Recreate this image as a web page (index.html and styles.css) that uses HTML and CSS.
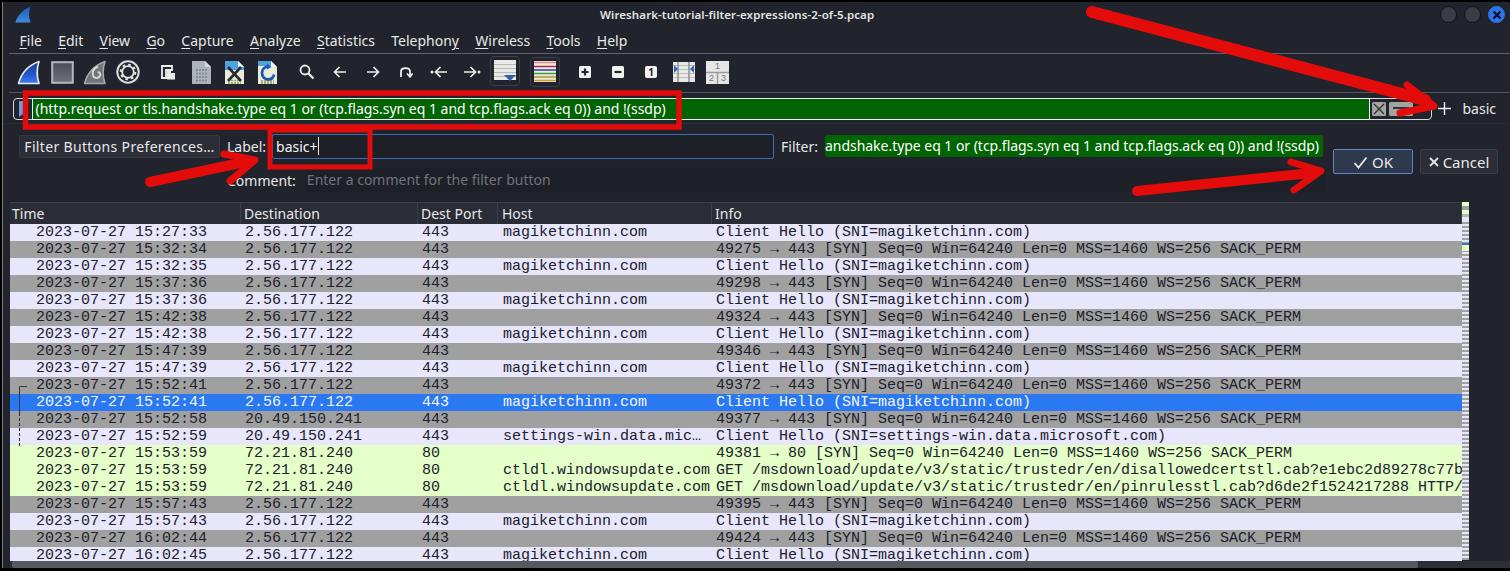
FILE: index.html
```html
<!DOCTYPE html>
<html lang="en">
<head>
<meta charset="utf-8">
<title>Wireshark</title>
<link rel="stylesheet" href="styles.css">
</head>
<body>
<div class="window">
  <header class="titlebar">
    <svg class="logo" width="17" height="17" viewBox="0 0 17 17"><defs><linearGradient id="lg" x1="0" y1="0" x2="0" y2="1"><stop offset="0" stop-color="#1f55b4"/><stop offset="1" stop-color="#3f8ae0"/></linearGradient></defs><path d="M0.5 16.5C2 10 7 4 15.5 0.5C13.5 6 13.5 11 15.5 16.5Z" fill="url(#lg)"/></svg>
    <div class="title">Wireshark-tutorial-filter-expressions-2-of-5.pcap</div>
    <div class="winbtns">
      <span class="winbtn"></span>
      <span class="winbtn"></span>
      <span class="winbtn close"><svg width="10" height="10" viewBox="0 0 10 10"><path d="M1.5 1.5L8.5 8.5M8.5 1.5L1.5 8.5" stroke="#0c1020" stroke-width="2.2"/></svg></span>
    </div>
  </header>
  <nav class="menu">
    <span><u>F</u>ile</span><span><u>E</u>dit</span><span><u>V</u>iew</span><span><u>G</u>o</span><span><u>C</u>apture</span><span><u>A</u>nalyze</span><span><u>S</u>tatistics</span><span>Telephon<u>y</u></span><span><u>W</u>ireless</span><span><u>T</u>ools</span><span><u>H</u>elp</span>
  </nav>
  <div class="toolbar">
    <div class="tgroup">
      <div class="tool"><svg width="24" height="25" viewBox="0 0 24 25"><defs><linearGradient id="fin" x1="0" y1="0" x2="0" y2="1"><stop offset="0" stop-color="#1b3f96"/><stop offset="0.6" stop-color="#2358cf"/><stop offset="1" stop-color="#3f7fe8"/></linearGradient></defs><path d="M1.5 23.5C4 14 11 5.500 22 1.500C19.500 9 19.500 16 22 23.500Z" fill="url(#fin)" stroke="#e8ecf4" stroke-width="1.600" stroke-linejoin="round"/></svg></div>
      <div class="tool"><svg width="23" height="23" viewBox="0 0 23 23"><defs><linearGradient id="stp" x1="0" y1="0" x2="0" y2="1"><stop offset="0" stop-color="#4a4e58"/><stop offset="1" stop-color="#6e727b"/></linearGradient></defs><rect x="1.200" y="1.200" width="20.600" height="20.600" fill="url(#stp)" stroke="#b4b7bd" stroke-width="2"/></svg></div>
      <div class="tool"><svg width="24" height="25" viewBox="0 0 24 25"><path d="M1.500 23.500C4 14 11 5.500 22 1.500C19.500 9 19.500 16 22 23.500Z" fill="#71747b" stroke="#a6a9ae" stroke-width="1.500" stroke-linejoin="round"/><path d="M15 6.500C10.500 8.500 9 12 10 15.500C11 18.500 15.500 18.800 17 16C18 14 16.500 11.800 14.600 12.500" fill="none" stroke="#d5d7da" stroke-width="2"/></svg></div>
      <div class="tool"><svg width="24" height="24" viewBox="0 0 24 24"><circle cx="12" cy="12" r="10.700" fill="#23262e" stroke="#dcdcdc" stroke-width="2"/><circle cx="12" cy="12" r="5.800" fill="none" stroke="#e4e4e4" stroke-width="1.800"/><circle cx="12" cy="12" r="7.300" fill="none" stroke="#e4e4e4" stroke-width="2" stroke-dasharray="2.600 3.130"/></svg></div>
    </div>
    <div class="tgroup">
      <div class="tool"><svg width="15" height="15" viewBox="0 0 15 15"><path d="M1 1H11V5H5V13H1Z" fill="#23262e" stroke="#f0f0f0" stroke-width="1.800"/><path d="M6 6H10V8H14V14.500H6Z" fill="#e8e8e8"/></svg></div>
      <div class="tool"><svg width="21" height="25" viewBox="0 0 21 25"><path d="M1 1H14L20 7V24H1Z" fill="#aeb3bb"/><path d="M14 1V7H20Z" fill="#d5d8dc"/><path d="M5 10H16M5 13.500H16M5 17H16M5 20.500H16" stroke="#858a94" stroke-width="1.800" stroke-dasharray="2 1"/></svg></div>
      <div class="tool"><svg width="21" height="25" viewBox="0 0 21 25"><path d="M1 1H14L20 7V24H1Z" fill="#e8ecd8"/><path d="M1 1H14L20 7V10H1Z" fill="#4fa3e0"/><path d="M14 1V7H20Z" fill="#eef2f6"/><path d="M4 20.500H17M4 23H17" stroke="#8d9a60" stroke-width="1.500" stroke-dasharray="2 1"/><path d="M4 7L17 21M17 7L4 21" stroke="#2a2c30" stroke-width="2.600"/></svg></div>
      <div class="tool"><svg width="21" height="25" viewBox="0 0 21 25"><path d="M1 1H14L20 7V24H1Z" fill="#e8ecd8"/><path d="M1 1H14L20 7V6H1Z" fill="#4fa3e0"/><path d="M14 1V7H20Z" fill="#eef2f6"/><path d="M4 21H17M4 23H17" stroke="#8d9a60" stroke-width="1.500" stroke-dasharray="2 1"/><path d="M12 6.500C7.500 6.500 5 9.500 5 13C5 17 8 19.500 11 19.500C14 19.500 16.500 17.500 17 14.500" fill="none" stroke="#1f57b8" stroke-width="2.800"/><path d="M10 3.500L14.500 7L10 9.500Z" fill="#1f57b8"/></svg></div>
    </div>
    <div class="tgroup">
      <div class="tool"><svg width="16" height="16" viewBox="0 0 16 16"><circle cx="6" cy="6" r="4.500" fill="none" stroke="#eee" stroke-width="1.800"/><path d="M9.500 9.500L14.500 14.500" stroke="#eee" stroke-width="2.200"/></svg></div>
      <div class="tool"><svg width="14" height="14" viewBox="0 0 14 14"><path d="M13 7H2M6.500 2L1.500 7L6.500 12" fill="none" stroke="#eee" stroke-width="1.700"/></svg></div>
      <div class="tool"><svg width="14" height="14" viewBox="0 0 14 14"><path d="M1 7H12M7.500 2L12.500 7L7.500 12" fill="none" stroke="#eee" stroke-width="1.700"/></svg></div>
      <div class="tool"><svg width="14" height="14" viewBox="0 0 14 14"><path d="M2 12V6.500C2 2 11 2 11 6.500V11" fill="none" stroke="#eee" stroke-width="1.800"/><path d="M8 8.500L11 12L13.500 8.500" fill="none" stroke="#eee" stroke-width="1.600"/></svg></div>
      <div class="tool"><svg width="18" height="14" viewBox="0 0 18 14"><circle cx="2" cy="7" r="1.500" fill="#eee"/><path d="M17 7H6M10.500 2L5.500 7L10.500 12" fill="none" stroke="#eee" stroke-width="1.700"/></svg></div>
      <div class="tool"><svg width="18" height="14" viewBox="0 0 18 14"><circle cx="16" cy="7" r="1.500" fill="#eee"/><path d="M1 7H12M7.500 2L12.500 7L7.500 12" fill="none" stroke="#eee" stroke-width="1.700"/></svg></div>
      <div class="tool boxed"><svg width="22" height="22" viewBox="0 0 22 22"><rect width="22" height="20" fill="#e9e9e6"/><path d="M0 4.500H22M0 8.500H22M0 12.500H22M0 16.500H22" stroke="#b9b9b5"/><path d="M10 15H22L16 21Z" fill="#2f5fa8"/></svg></div>
    </div>
    <div class="tgroup">
      <div class="tool boxed"><svg width="22" height="22" viewBox="0 0 22 22"><rect width="22" height="21" fill="#ecebe6"/><path d="M0 1.500H22" stroke="#e08a8a" stroke-width="1.500"/><path d="M0 5.500H22" stroke="#b8263a" stroke-width="1.500"/><path d="M0 9H22" stroke="#2c3fae" stroke-width="1.500"/><path d="M0 12.500H22" stroke="#3f9a3a" stroke-width="1.500"/><path d="M0 16H22" stroke="#a39a2a" stroke-width="1.500"/><path d="M0 19.500H22" stroke="#cf9a2c" stroke-width="1.500"/></svg></div>
    </div>
    <div class="tgroup">
      <div class="tool"><svg width="12" height="12" viewBox="0 0 12 12"><rect width="12" height="12" rx="1.500" fill="#f2f2f2"/><path d="M2.500 6H9.500M6 2.500V9.500" stroke="#22252e" stroke-width="2.200"/></svg></div>
      <div class="tool"><svg width="12" height="12" viewBox="0 0 12 12"><rect width="12" height="12" rx="1.500" fill="#f2f2f2"/><path d="M2.500 6H9.500" stroke="#22252e" stroke-width="2.200"/></svg></div>
      <div class="tool"><span class="onebox">1</span></div>
      <div class="tool"><svg width="22" height="20" viewBox="0 0 22 20"><rect width="22" height="20" fill="#e9e9e6"/><path d="M0 3.500H22M0 7.500H22M0 11.500H22M0 15.500H22" stroke="#bdbdb9"/><path d="M5 0V20M16 0V20" stroke="#8a8d92" stroke-width="1.500"/><path d="M1 3V11L5 7ZM21 3V11L17 7Z" fill="#2a6bb0"/></svg></div>
      <div class="tool"><svg width="23" height="23" viewBox="0 0 23 23"><rect width="23" height="23" fill="#e6e6e6"/><path d="M0 11.500H23M11.500 11.500V23" stroke="#9a9a9a" stroke-width="1.400"/><text x="11.500" y="8" class="gridnum">1</text><text x="5.500" y="20" class="gridnum">2</text><text x="17.500" y="20" class="gridnum">3</text></svg></div>
    </div>
  </div>
  <div class="filterrow">
    <div class="filterbar">
      <svg class="bookmark" width="8" height="16" viewBox="0 0 8 16"><path d="M0 0H8V16L4 13L0 16Z" fill="#6f9bd8"/></svg>
      <div class="filterinput">(http.request or tls.handshake.type eq 1 or (tcp.flags.syn eq 1 and tcp.flags.ack eq 0)) and !(ssdp)</div>
      <svg class="clear" width="14" height="14" viewBox="0 0 14 14"><rect width="14" height="14" rx="1.500" fill="#a3a3a0"/><path d="M2 2L12 12M12 2L2 12" stroke="#2c2e33" stroke-width="1.200"/></svg>
      <svg class="drop" width="24" height="14" viewBox="0 0 24 14"><rect width="24" height="14" rx="1.500" fill="#a3a3a0"/><path d="M4 6H20" stroke="#33353b" stroke-width="2"/></svg>
    </div>
    <span class="plus"><svg width="13" height="13" viewBox="0 0 13 13"><path d="M0 6.500H13M6.500 0V13" stroke="#f0f0f0" stroke-width="1.400"/></svg></span>
    <span class="basic">basic</span>
  </div>
  <section class="editor">
    <div class="editorform">
      <div class="editrow">
        <button class="prefs">Filter Buttons Preferences…</button>
        <label class="flabel">Label:</label>
        <div class="labelinput">basic+<span class="caret"></span></div>
        <label class="flabel filterlabel">Filter:</label>
        <div class="filtervalue"><span>handshake.type eq 1 or (tcp.flags.syn eq 1 and tcp.flags.ack eq 0)) and !(ssdp)</span></div>
      </div>
      <div class="commentrow">
        <label class="flabel">Comment:</label>
        <div class="commentinput">Enter a comment for the filter button</div>
      </div>
    </div>
    <div class="actions">
      <button class="act ok"><svg width="15" height="13" viewBox="0 0 15 13"><path d="M1.500 7L5.500 11.500L13.500 1.500" fill="none" stroke="#e8e8e8" stroke-width="1.800"/></svg>OK</button>
      <button class="act"><svg width="10" height="10" viewBox="0 0 10 10"><path d="M1 1L9 9M9 1L1 9" stroke="#e8e8e8" stroke-width="1.800"/></svg>Cancel</button>
    </div>
  </section>
  <main class="packets">
    <div class="tablewrap">
      <div class="thead"><span>Time</span><span>Destination</span><span>Dest Port</span><span>Host</span><span>Info</span></div>
      <div class="rows">
        <div class="row l"><span>2023-07-27 15:27:33</span><span>2.56.177.122</span><span>443</span><span>magiketchinn.com</span><span>Client Hello (SNI=magiketchinn.com)</span></div>
        <div class="row g"><span>2023-07-27 15:32:34</span><span>2.56.177.122</span><span>443</span><span></span><span>49275 → 443 [SYN] Seq=0 Win=64240 Len=0 MSS=1460 WS=256 SACK_PERM</span></div>
        <div class="row l"><span>2023-07-27 15:32:35</span><span>2.56.177.122</span><span>443</span><span>magiketchinn.com</span><span>Client Hello (SNI=magiketchinn.com)</span></div>
        <div class="row g"><span>2023-07-27 15:37:36</span><span>2.56.177.122</span><span>443</span><span></span><span>49298 → 443 [SYN] Seq=0 Win=64240 Len=0 MSS=1460 WS=256 SACK_PERM</span></div>
        <div class="row l"><span>2023-07-27 15:37:36</span><span>2.56.177.122</span><span>443</span><span>magiketchinn.com</span><span>Client Hello (SNI=magiketchinn.com)</span></div>
        <div class="row g"><span>2023-07-27 15:42:38</span><span>2.56.177.122</span><span>443</span><span></span><span>49324 → 443 [SYN] Seq=0 Win=64240 Len=0 MSS=1460 WS=256 SACK_PERM</span></div>
        <div class="row l"><span>2023-07-27 15:42:38</span><span>2.56.177.122</span><span>443</span><span>magiketchinn.com</span><span>Client Hello (SNI=magiketchinn.com)</span></div>
        <div class="row g"><span>2023-07-27 15:47:39</span><span>2.56.177.122</span><span>443</span><span></span><span>49346 → 443 [SYN] Seq=0 Win=64240 Len=0 MSS=1460 WS=256 SACK_PERM</span></div>
        <div class="row l"><span>2023-07-27 15:47:39</span><span>2.56.177.122</span><span>443</span><span>magiketchinn.com</span><span>Client Hello (SNI=magiketchinn.com)</span></div>
        <div class="row g"><span>2023-07-27 15:52:41</span><span>2.56.177.122</span><span>443</span><span></span><span>49372 → 443 [SYN] Seq=0 Win=64240 Len=0 MSS=1460 WS=256 SACK_PERM</span></div>
        <div class="row s"><span>2023-07-27 15:52:41</span><span>2.56.177.122</span><span>443</span><span>magiketchinn.com</span><span>Client Hello (SNI=magiketchinn.com)</span></div>
        <div class="row g"><span>2023-07-27 15:52:58</span><span>20.49.150.241</span><span>443</span><span></span><span>49377 → 443 [SYN] Seq=0 Win=64240 Len=0 MSS=1460 WS=256 SACK_PERM</span></div>
        <div class="row l"><span>2023-07-27 15:52:59</span><span>20.49.150.241</span><span>443</span><span>settings-win.data.mic…</span><span>Client Hello (SNI=settings-win.data.microsoft.com)</span></div>
        <div class="row h"><span>2023-07-27 15:53:59</span><span>72.21.81.240</span><span>80</span><span></span><span>49381 → 80 [SYN] Seq=0 Win=64240 Len=0 MSS=1460 WS=256 SACK_PERM</span></div>
        <div class="row h"><span>2023-07-27 15:53:59</span><span>72.21.81.240</span><span>80</span><span>ctldl.windowsupdate.com</span><span>GET /msdownload/update/v3/static/trustedr/en/disallowedcertstl.cab?e1ebc2d89278c77b</span></div>
        <div class="row h"><span>2023-07-27 15:53:59</span><span>72.21.81.240</span><span>80</span><span>ctldl.windowsupdate.com</span><span>GET /msdownload/update/v3/static/trustedr/en/pinrulesstl.cab?d6de2f1524217288 HTTP/</span></div>
        <div class="row g"><span>2023-07-27 15:57:43</span><span>2.56.177.122</span><span>443</span><span></span><span>49395 → 443 [SYN] Seq=0 Win=64240 Len=0 MSS=1460 WS=256 SACK_PERM</span></div>
        <div class="row l"><span>2023-07-27 15:57:43</span><span>2.56.177.122</span><span>443</span><span>magiketchinn.com</span><span>Client Hello (SNI=magiketchinn.com)</span></div>
        <div class="row g"><span>2023-07-27 16:02:44</span><span>2.56.177.122</span><span>443</span><span></span><span>49424 → 443 [SYN] Seq=0 Win=64240 Len=0 MSS=1460 WS=256 SACK_PERM</span></div>
        <div class="row l"><span>2023-07-27 16:02:45</span><span>2.56.177.122</span><span>443</span><span>magiketchinn.com</span><span>Client Hello (SNI=magiketchinn.com)</span></div>
        <svg class="convline" width="20" height="62" viewBox="0 0 20 62"><path d="M10 1.500H17M9.500 1.500V28" fill="none" stroke="#33353d" stroke-width="1"/><path d="M9.500 28V62" fill="none" stroke="#23252c" stroke-width="1" stroke-dasharray="3 2"/></svg>
      </div>
    </div>
    <div class="minimap"></div>
  </main>
  <div class="hscroll"><div class="hthumb"></div></div>
</div>
<svg class="annotations" width="1510" height="571" viewBox="0 0 1510 571">
  <g fill="none" stroke="#e40b0b">
    <rect x="25.500" y="93" width="653.500" height="34" stroke-width="5.500"/>
    <rect x="270" y="130" width="100" height="37" stroke-width="5"/>
  </g>
  <g fill="none" stroke="#e40b0b" stroke-linecap="round" stroke-linejoin="round">
    <path d="M1092 12L1425 100" stroke-width="12"/>
    <path d="M1407 85L1434 106L1400 113" stroke-width="7"/>
    <path d="M1137 191L1312 173" stroke-width="10"/>
    <path d="M1291 162L1321 171L1294 190" stroke-width="7"/>
    <path d="M150 182L245 162" stroke-width="10"/>
    <path d="M224 154L255 160L230 181" stroke-width="7"/>
  </g>
</svg>
</body>
</html>
```

FILE: styles.css
```css
* { box-sizing: border-box; }
html, body { margin: 0; padding: 0; width: 1510px; height: 571px; overflow: hidden; background: #000; }
body { position: relative; font-family: "Noto Sans", "Open Sans", sans-serif; font-size: 14px; color: #e8e8e8; padding: 2px 0 3px 2px; }

.window { height: 566px; display: flex; flex-direction: column; background: #21242c; border-left: 1px solid #7c7e84; overflow: hidden; }

.titlebar { height: 27px; flex: none; display: flex; align-items: center; padding: 0 5px 2px 12px; }
.logo { flex: none; }
.title { flex: 1; padding-left: 568px; font-size: 11.500px; font-weight: 600; letter-spacing: 0.1px; color: #e4e4e4; white-space: nowrap; }
.winbtns { display: flex; gap: 7px; }
.winbtn { width: 17px; height: 17px; border-radius: 50%; background: #3a3d47; border: 1px solid #101216; display: flex; align-items: center; justify-content: center; }
.winbtn.close { background: #2a74ec; border-color: #2a74ec; }

.menu { height: 25px; flex: none; display: flex; align-items: center; gap: 16.250px; margin-left: 6px; padding-left: 10.500px; border-bottom: 1px solid #62646b; line-height: 20px; }
.menu u { text-underline-offset: 2px; }

.toolbar { height: 39px; flex: none; display: flex; gap: 7px; align-items: center; margin-left: 6px; padding: 0 0 2px 3.500px; border-bottom: 1px solid #55575e; }
.tgroup { display: flex; }
.tool { width: 33px; height: 33px; display: flex; align-items: center; justify-content: center; }
.tool.boxed { width: 30px; height: 30px; margin: 0 1.500px; border: 1px solid #3c3f49; border-radius: 4px; }
.onebox { width: 12px; height: 12px; background: #f2f2f2; border-radius: 2px; color: #22252e; font: 700 10px/12px "Noto Sans", sans-serif; text-align: center; }
.gridnum { font: 9px "Liberation Sans", sans-serif; fill: #777; text-anchor: middle; }

.filterrow { height: 31px; flex: none; display: flex; align-items: center; padding-left: 10px; border-bottom: 1px solid #2d3038; }
.filterbar { width: 1419px; height: 22px; margin-top: 1px; display: flex; align-items: center; border: 1px solid #d8d8d8; border-radius: 4px; background: #21242c; }
.bookmark { flex: none; margin-left: 5px; }
.filterinput { width: 1338px; height: 22px; margin-left: 5px; flex: none; padding-left: 2.500px; background: #006400; border: 1px solid #f0f0f0; color: #fff; letter-spacing: -0.015px; line-height: 19px; white-space: nowrap; overflow: hidden; }
.clear { flex: none; margin-left: 2px; }
.drop { flex: none; margin-left: 3px; }
.plus { width: 13px; display: flex; margin-left: 5.500px; }
.basic { margin-left: 12px; color: #e8e8e8; }

.editor { height: 78px; flex: none; display: flex; padding: 9px 0 0 16px; }
.editorform { width: 1308px; display: flex; flex-direction: column; gap: 9px; }
.editrow { height: 26px; display: flex; align-items: center; }
.prefs { width: 201px; height: 23px; flex: none; padding: 0; background: #2b2e37; border: 1px solid #353841; border-radius: 2px; color: #e8e8e8; font: 14px "Noto Sans", sans-serif; letter-spacing: 0.34px; text-align: center; }
.flabel { flex: none; color: #e8e8e8; }
.editrow .flabel { margin-left: 7px; }
.labelinput { width: 502px; height: 25px; margin-left: 6px; flex: none; padding-left: 3px; background: #1d2027; border: 1px solid #3b6db0; border-radius: 2px; line-height: 23px; color: #f4f4f4; display: flex; }
.caret { width: 1px; height: 18px; margin: 2px 0 0 0; background: #eee; }
.editrow .filterlabel { margin-left: 7px; }
.filtervalue { width: 498px; height: 22px; flex: none; margin-left: 7px; padding-right: 4px; background: #006400; border-radius: 2px; color: #fff; letter-spacing: -0.035px; line-height: 21px; display: flex; justify-content: flex-end; overflow: hidden; white-space: nowrap; }
.filtervalue span { flex: none; }
.commentrow { margin-left: 208px; height: 24px; display: flex; align-items: center; }
.commentinput { flex: none; width: 1021px; height: 24px; margin-left: 9px; padding-left: 2px; color: #70737b; line-height: 23px; background: #1d2027; border-radius: 2px; }

.actions { display: flex; gap: 7px; margin-left: 6px; padding-top: 16px; align-items: flex-start; }
.act { width: 78px; height: 25px; padding: 1px 0 0; display: flex; align-items: center; justify-content: center; gap: 4px; background: #2b2e37; border: 1px solid #3b3e47; border-radius: 2px; color: #e8e8e8; font: 15px "Noto Sans", sans-serif; }
.act.ok { width: 80px; background: #2f394d; border-color: #5c87c5; }

.packets { height: 359px; flex: none; display: flex; padding-left: 7px; }
.tablewrap { width: 1452px; flex: none; display: flex; flex-direction: column; overflow: hidden; }
.thead { height: 22px; flex: none; display: grid; grid-template-columns: 231px 177px 80px 214px minmax(0, 1fr); background: #2a2d36; border-top: 1px solid #3c3f48; line-height: 21px; }
.thead span { padding-left: 3px; border-right: 1px solid #3c3f48; }
.thead span:first-child { padding-left: 2px; }
.thead span:nth-child(4) { padding-left: 4px; }
.rows { position: relative; flex: 1; overflow: hidden; }
.row { height: 17px; display: grid; grid-template-columns: 231px 177px 80px 214px minmax(0, 1fr); font: 15px/17px "Liberation Mono", monospace; color: #20202e; white-space: nowrap; }
.row span { padding-left: 4px; overflow: hidden; }
.row span:first-child { padding-left: 26px; }
.row span:nth-child(4) { padding-left: 5px; }
.row.l { background: #e7e6fb; }
.row.g { background: #a0a0a0; }
.row.h { background: #e4ffc7; }
.row.s { background: #2a78f2; color: #f4f6ff; }
.convline { position: absolute; left: 0; top: 161px; }

.minimap { width: 7px; height: 358px; flex: none; background:
  linear-gradient(#e4ffc7 0 4px, #a0a0a0 4px 8px, #e4ffc7 8px 12px, #b5b5b5 12px 15px, #e7e6fb 15px 18px, transparent 18px 41px, #3d74c8 41px 43px, #e4ffc7 43px 49px, transparent 49px),
  repeating-linear-gradient(#a0a0a0 0 2px, #e7e6fb 2px 4px); }

.hscroll { height: 7px; flex: none; margin-left: 7px; background: #2c2f38; }
.hthumb { width: 1406px; height: 7px; margin-left: 2px; background: #565961; border-radius: 2px; }

.annotations { position: absolute; left: 0; top: 0; pointer-events: none; }
```
